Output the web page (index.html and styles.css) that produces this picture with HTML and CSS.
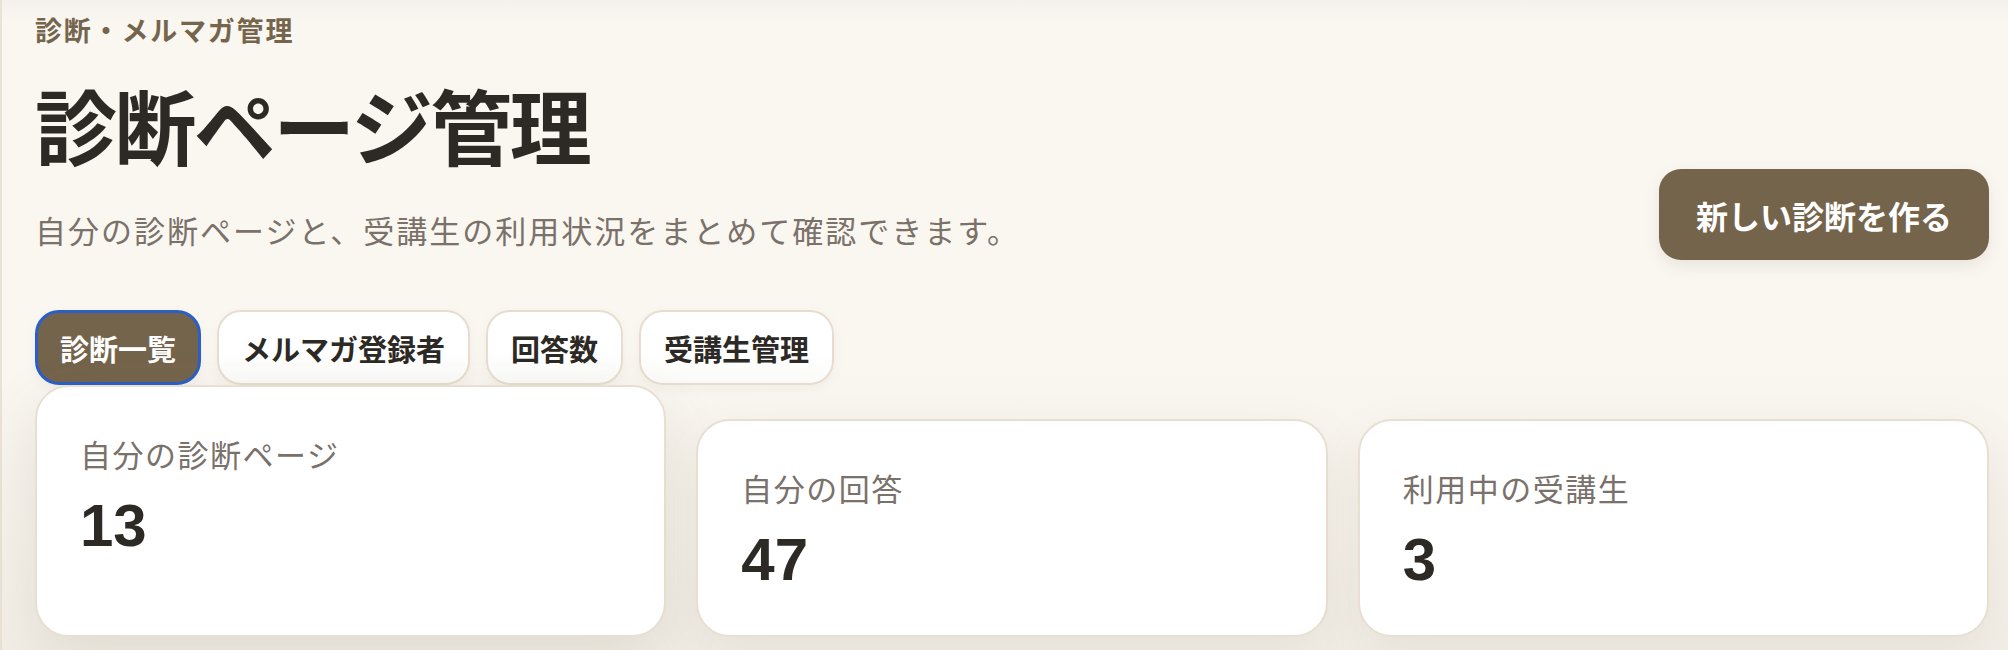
FILE: index.html
```html
<!DOCTYPE html>
<html lang="ja">
<head>
<meta charset="utf-8">
<title>診断ページ管理</title>
<link rel="stylesheet" href="styles.css">
</head>
<body>
<main class="page">
  <header class="header">
    <div class="header-text">
      <p class="eyebrow">診断・メルマガ管理</p>
      <h1 class="title">診断ページ管理</h1>
      <p class="lead">自分の診断ページと、受講生の利用状況をまとめて確認できます。</p>
    </div>
    <button class="primary-btn" type="button">新しい診断を作る</button>
  </header>

  <nav class="tabs">
    <button class="tab tab--active" type="button">診断一覧</button>
    <button class="tab" type="button">メルマガ登録者</button>
    <button class="tab" type="button">回答数</button>
    <button class="tab" type="button">受講生管理</button>
  </nav>

  <section class="stats">
    <div class="card card--lift">
      <div class="card-label">自分の診断ページ</div>
      <div class="card-value">13</div>
    </div>
    <div class="card">
      <div class="card-label">自分の回答</div>
      <div class="card-value">47</div>
    </div>
    <div class="card">
      <div class="card-label">利用中の受講生</div>
      <div class="card-value">3</div>
    </div>
  </section>
</main>
</body>
</html>
```

FILE: styles.css
```css
* { box-sizing: border-box; }

html, body {
  margin: 0;
  padding: 0;
}

body {
  background: linear-gradient(to bottom, #f4f1ec 0, #faf7f1 22px, #faf7f1 55%, #f2eee7 100%);
  font-family: "Noto Sans CJK JP", "Noto Sans", sans-serif;
  color: #2d2925;
  min-height: 100vh;
  overflow: hidden;
}

.page {
  min-height: 100vh;
  border-left: 2px solid #e9e2d6;
  padding: 10px 19px 0 33px;
}

.header {
  display: flex;
  justify-content: space-between;
  align-items: flex-end;
}

.eyebrow {
  margin: 0;
  font-size: 27px;
  line-height: 39px;
  font-weight: 700;
  letter-spacing: 1.8px;
  color: #76654d;
}

.title {
  margin: 27px 0 0;
  font-size: 82px;
  line-height: 96px;
  font-weight: 700;
  letter-spacing: -2.6px;
  color: #2d2925;
}

.lead {
  margin: 31px 0 0;
  font-size: 31px;
  line-height: 54px;
  letter-spacing: 2px;
  color: #7a716a;
}

.primary-btn {
  display: inline-flex;
  align-items: center;
  justify-content: center;
  height: 91px;
  margin-bottom: -3px;
  padding: 0 37px;
  border: none;
  border-radius: 22px;
  background: #75644c;
  color: #ffffff;
  font-family: inherit;
  font-size: 32px;
  font-weight: 700;
  letter-spacing: 0;
  box-shadow: 0 6px 16px rgba(90, 70, 40, 0.10);
}

.tabs {
  display: flex;
  gap: 16px;
  margin-top: 53px;
}

.tab {
  display: inline-flex;
  align-items: center;
  height: 75px;
  padding: 0 23px;
  border: 2px solid #e6ddcf;
  border-radius: 24px;
  background: linear-gradient(to bottom, #ffffff 0%, #ffffff 60%, #fafaf8 100%);
  color: #2d2925;
  font-family: inherit;
  font-size: 29px;
  font-weight: 700;
  letter-spacing: 0;
  box-shadow: 0 4px 12px rgba(90, 70, 40, 0.05);
}

.tab--active {
  border: 3px solid #2b5fc6;
  padding: 0 22px;
  background: #75644c;
  color: #ffffff;
}

.stats {
  display: grid;
  grid-template-columns: repeat(3, 1fr);
  gap: 30px;
  align-items: end;
  margin-top: 0;
}

.card {
  background: #ffffff;
  border: 2px solid #e7dfd2;
  border-radius: 34px;
  padding: 44px 43px 39px;
  box-shadow: 0 18px 50px rgba(110, 90, 60, 0.09);
}

.card--lift {
  padding-bottom: 73px;
  box-shadow: 0 22px 60px rgba(110, 90, 60, 0.13);
}

.card-label {
  font-size: 31px;
  line-height: 45px;
  letter-spacing: 1.5px;
  color: #7a716a;
}

.card-value {
  margin-top: 14px;
  font-family: "Liberation Sans", "Noto Sans CJK JP", sans-serif;
  font-size: 60px;
  line-height: 72px;
  font-weight: 700;
  color: #2d2925;
}
```
